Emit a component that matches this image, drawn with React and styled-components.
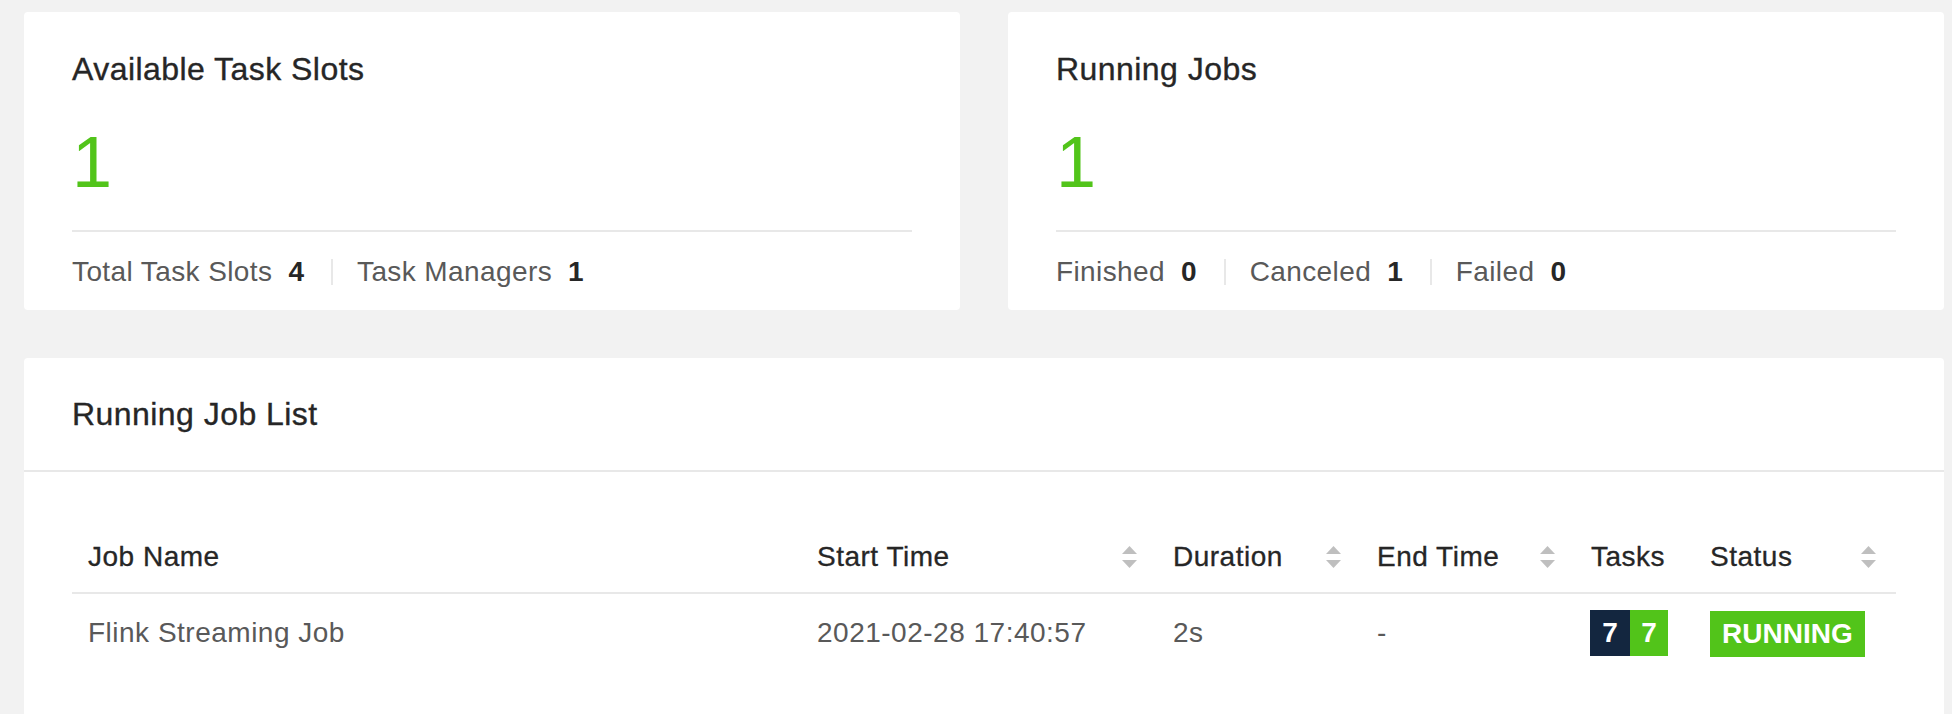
import React from 'react';
import styled, { createGlobalStyle } from 'styled-components';

const GlobalStyle = createGlobalStyle`
    body{
        margin:0;
        background-color:#f2f2f2;
        font-family:"Liberation Sans", Arial, sans-serif;
    }
`
const Page = styled.div`
    padding:12px 8px 0 24px;
`
const StatRow = styled.div`
    display:grid;
    grid-template-columns:1fr 1fr;
    gap:48px;
`
const StatCard = styled.div`
    background-color:#fff;
    border-radius:4px;
    padding:37px 48px 16px;
    display:flex;
    flex-direction:column;
`
const CardTitle = styled.div`
    font-size:32px;
    line-height:40px;
    letter-spacing:0.45px;
    color:#262626;
    -webkit-text-stroke:0.35px #262626;
`
const BigNumber = styled.div`
    margin-top:37px;
    font-size:72px;
    line-height:72px;
    color:#52c41a;
`
const Line = styled.div`
    margin-top:32px;
    height:2px;
    background-color:#e8e8e8;
`
const Footer = styled.div`
    margin-top:18px;
    display:flex;
    align-items:center;
    font-size:28px;
    line-height:44px;
    letter-spacing:0.4px;
    color:#595959;
`
const Value = styled.span`
    margin-left:16px;
    font-weight:bold;
    letter-spacing:0;
    color:#262626;
`
const Split = styled.span`
    width:2px;
    height:26px;
    background-color:#e8e8e8;
    margin:0 24px 0 27px;
`
const ListCard = styled.div`
    margin-top:48px;
    background-color:#fff;
    border-radius:4px 4px 0 0;
`
const ListHead = styled.div`
    height:112px;
    padding:0 48px;
    display:flex;
    align-items:center;
    border-bottom:2px solid #e8e8e8;
    font-size:32px;
    line-height:40px;
    letter-spacing:0.45px;
    color:#262626;
    -webkit-text-stroke:0.35px #262626;
`
const ListBody = styled.div`
    padding:48px;
`
const Table = styled.table`
    width:100%;
    border-collapse:collapse;
    table-layout:fixed;
    font-size:28px;
    line-height:44px;
`
const Th = styled.th`
    padding:15px 16px 13px;
    text-align:left;
    font-weight:normal;
    letter-spacing:0.5px;
    color:#262626;
    -webkit-text-stroke:0.3px #262626;
    border-bottom:2px solid #e8e8e8;
    white-space:nowrap;
`
const ThInner = styled.div`
    display:flex;
    align-items:center;
    justify-content:space-between;
    >svg{
        margin-right:4px;
        flex:none;
    }
`
const Td = styled.td`
    padding:16px;
    color:#595959;
    letter-spacing:0.5px;
    white-space:nowrap;
`
const Badges = styled.div`
    display:flex;
    height:46px;
    margin-left:-1px;
    letter-spacing:0;
`
const Count = styled.span`
    width:${p => p.$w}px;
    background-color:${p => p.$bg};
    color:#fff;
    font-weight:bold;
    text-align:center;
    line-height:46px;
`
const Status = styled.span`
    display:inline-block;
    height:46px;
    line-height:46px;
    padding:0 12px;
    background-color:#52c41a;
    color:#fff;
    font-weight:bold;
    letter-spacing:0;
    vertical-align:middle;
`

const Sorter = () => (
    <svg width="15" height="22" viewBox="0 0 15 22">
        <polygon points="7.5,0 15,8 0,8" fill="#bfbfbf" />
        <polygon points="0,14 15,14 7.5,22" fill="#bfbfbf" />
    </svg>
)

const columns = [
    { title: 'Job Name', width: 729 },
    { title: 'Start Time', width: 356, sort: true },
    { title: 'Duration', width: 204, sort: true },
    { title: 'End Time', width: 214, sort: true },
    { title: 'Tasks', width: 119 },
    { title: 'Status', width: 202, sort: true },
]

const job = { name: 'Flink Streaming Job', start: '2021-02-28 17:40:57', duration: '2s', end: '-', total: 7, running: 7, status: 'RUNNING' }

export default function App(){
    return(
        <Page>
            <GlobalStyle/>
            <StatRow>
                <StatCard>
                    <CardTitle>Available Task Slots</CardTitle>
                    <BigNumber>1</BigNumber>
                    <Line/>
                    <Footer>
                        Total Task Slots<Value>4</Value>
                        <Split/>
                        Task Managers<Value>1</Value>
                    </Footer>
                </StatCard>
                <StatCard>
                    <CardTitle>Running Jobs</CardTitle>
                    <BigNumber>1</BigNumber>
                    <Line/>
                    <Footer>
                        Finished<Value>0</Value>
                        <Split/>
                        Canceled<Value>1</Value>
                        <Split/>
                        Failed<Value>0</Value>
                    </Footer>
                </StatCard>
            </StatRow>
            <ListCard>
                <ListHead>Running Job List</ListHead>
                <ListBody>
                    <Table>
                        <colgroup>
                            {columns.map(c => <col key={c.title} style={{ width: c.width }} />)}
                        </colgroup>
                        <thead>
                            <tr>
                                {columns.map(c => (
                                    <Th key={c.title}>
                                        <ThInner>
                                            <span>{c.title}</span>
                                            {c.sort && <Sorter/>}
                                        </ThInner>
                                    </Th>
                                ))}
                            </tr>
                        </thead>
                        <tbody>
                            <tr>
                                <Td>{job.name}</Td>
                                <Td>{job.start}</Td>
                                <Td>{job.duration}</Td>
                                <Td>{job.end}</Td>
                                <Td>
                                    <Badges>
                                        <Count $w={40} $bg="#13263f">{job.total}</Count>
                                        <Count $w={38} $bg="#52c41a">{job.running}</Count>
                                    </Badges>
                                </Td>
                                <Td><Status>{job.status}</Status></Td>
                            </tr>
                        </tbody>
                    </Table>
                </ListBody>
            </ListCard>
        </Page>
    )
}
